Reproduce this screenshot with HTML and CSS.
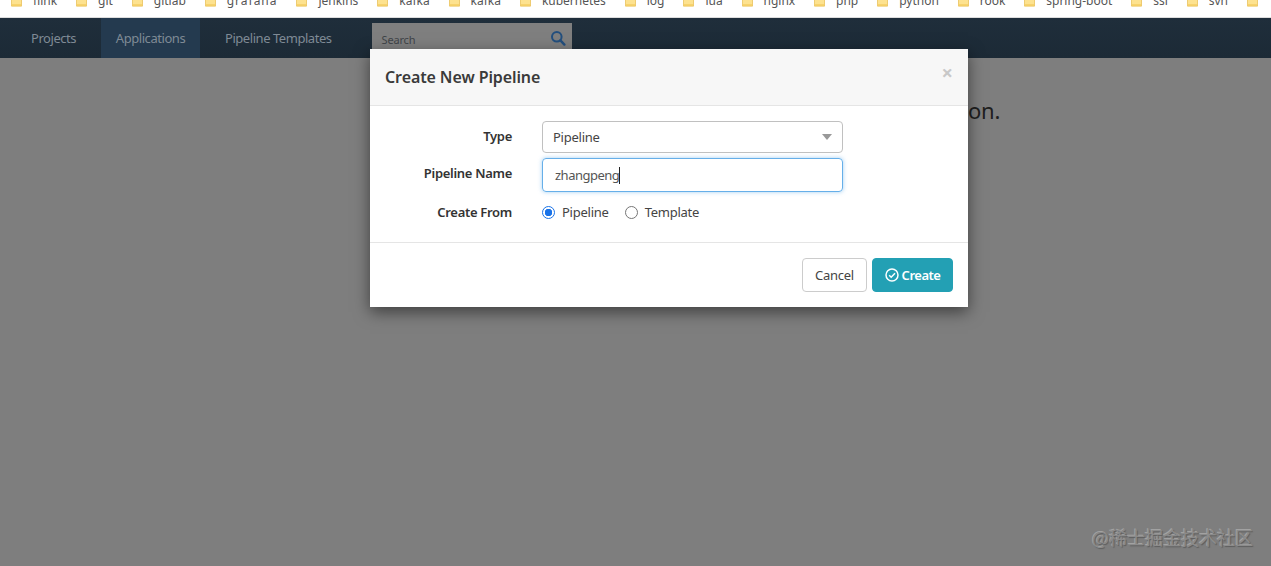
FILE: index.html
```html
<!DOCTYPE html>
<html lang="en">
<head>
<meta charset="utf-8">
<title>Create New Pipeline</title>
<link rel="stylesheet" href="styles.css">
</head>
<body>
<svg class="defs" width="0" height="0" aria-hidden="true">
  <symbol id="folder" viewBox="0 0 12 10">
    <path d="M0.5 0.5h4l1.2 1.5h5.8v7.5h-11z" fill="#fde28f" stroke="#e8bd4f" stroke-width="0.8"/>
    <path d="M1 7.5h10v1.6h-10z" fill="#f4cd62"/>
  </symbol>
</svg>
<div class="bookmarks">
  <ul class="bookmark-list">
    <li class="bookmark"><svg class="folder"><use href="#folder"/></svg>flink</li>
    <li class="bookmark"><svg class="folder"><use href="#folder"/></svg>git</li>
    <li class="bookmark"><svg class="folder"><use href="#folder"/></svg>gitlab</li>
    <li class="bookmark bookmark-wide"><svg class="folder"><use href="#folder"/></svg>grafana</li>
    <li class="bookmark"><svg class="folder"><use href="#folder"/></svg>jenkins</li>
    <li class="bookmark"><svg class="folder"><use href="#folder"/></svg>kafka</li>
    <li class="bookmark"><svg class="folder"><use href="#folder"/></svg>kafka</li>
    <li class="bookmark"><svg class="folder"><use href="#folder"/></svg>kubernetes</li>
    <li class="bookmark"><svg class="folder"><use href="#folder"/></svg>log</li>
    <li class="bookmark"><svg class="folder"><use href="#folder"/></svg>lua</li>
    <li class="bookmark"><svg class="folder"><use href="#folder"/></svg>nginx</li>
    <li class="bookmark"><svg class="folder"><use href="#folder"/></svg>php</li>
    <li class="bookmark"><svg class="folder"><use href="#folder"/></svg>python</li>
    <li class="bookmark"><svg class="folder"><use href="#folder"/></svg>rook</li>
    <li class="bookmark"><svg class="folder"><use href="#folder"/></svg>spring-boot</li>
    <li class="bookmark"><svg class="folder"><use href="#folder"/></svg>ssl</li>
    <li class="bookmark"><svg class="folder"><use href="#folder"/></svg>svn</li>
    <li class="bookmark"><svg class="folder"><use href="#folder"/></svg></li>
  </ul>
</div>
<nav class="nav">
  <a class="nav-link nav-projects">Projects</a>
  <a class="nav-link nav-active">Applications</a>
  <a class="nav-link nav-templates">Pipeline Templates</a>
  <div class="search">
    <span class="search-text">Search</span>
    <svg class="search-icon" viewBox="0 0 16 16"><circle cx="6.8" cy="6.8" r="4.8" fill="none" stroke="#234f7e" stroke-width="2"/><path d="M10.4 10.4l4 4.2" stroke="#234f7e" stroke-width="2.4" stroke-linecap="round"/></svg>
  </div>
</nav>
<main class="content">
  <p class="empty">No pipelines configured for this application.</p>
</main>
<section class="modal">
  <header class="modal-header">
    <h2 class="modal-title">Create New Pipeline</h2>
    <span class="close">×</span>
  </header>
  <form class="form">
    <label class="label label-type">Type</label>
    <div class="select"><span>Pipeline</span><i class="caret"></i></div>
    <label class="label label-name">Pipeline Name</label>
    <div class="input"><span>zhangpeng</span><i class="cursor"></i></div>
    <label class="label">Create From</label>
    <div class="radios">
      <span class="radio radio-on"></span><span class="radio-text">Pipeline</span>
      <span class="radio"></span><span class="radio-text">Template</span>
    </div>
  </form>
  <footer class="modal-footer">
    <button class="btn btn-cancel" type="button">Cancel</button>
    <button class="btn btn-create" type="button">
      <svg class="check" viewBox="0 0 14 14"><circle cx="7" cy="7" r="6" fill="none" stroke="#fff" stroke-width="1.5"/><path d="M4.2 7.2l2 2 3.8-4" fill="none" stroke="#fff" stroke-width="1.5"/></svg>Create
    </button>
  </footer>
</section>
<div class="watermark">@稀士掘金技术社区</div>
</body>
</html>
```

FILE: styles.css
```css
* { box-sizing: border-box; }
html, body { height: 100%; }
body {
  margin: 0;
  background: #7e7e7e;
  font-family: "Noto Sans", sans-serif;
  overflow: hidden;
}
.defs { position: absolute; }
.bookmarks {
  height: 18px;
  background: #fff;
  border-bottom: 1px solid #ddd;
  overflow: hidden;
}
.bookmark-list {
  display: flex;
  gap: 18.9px;
  list-style: none;
  margin: -7px 0 0;
  padding: 0 0 0 11px;
  font-size: 12px;
  line-height: 16px;
  color: #555;
  white-space: nowrap;
}
.bookmark { display: flex; align-items: center; }
.bookmark-wide { letter-spacing: 1px; }
.folder { width: 11px; height: 10px; margin-right: 11px; margin-top: 2px; }
.nav {
  height: 40px;
  display: flex;
  align-items: stretch;
  background: linear-gradient(#1f2e3b, #1c2a36);
  font-size: 13px;
  letter-spacing: -0.45px;
  color: #7f8a95;
}
.nav-link { display: flex; align-items: center; }
.nav-projects { width: 101px; padding-left: 31px; }
.nav-active { width: 99px; justify-content: center; background: #243a4f; }
.nav-templates { padding: 0 40px 0 25px; }
.search {
  width: 200px;
  height: 32px;
  margin-top: 5px;
  background: #7f7f7f;
  display: flex;
  align-items: center;
  justify-content: space-between;
  padding: 0 6px 0 10px;
  color: #3f4448;
  font-size: 11px;
  letter-spacing: -0.2px;
}
.search-icon { width: 16px; height: 16px; margin-top: -2px; }
.content { padding-top: 37px; }
.empty {
  margin: 0 271px 0 0;
  text-align: right;
  font-size: 22px;
  line-height: 30px;
  color: #1f1f1f;
  letter-spacing: -0.3px;
}
.modal {
  position: absolute;
  left: 370px;
  top: 49px;
  width: 598px;
  height: 258px;
  background: #fff;
  box-shadow: 0 5px 15px rgba(0,0,0,.5);
  color: #333;
}
.modal-header {
  height: 57px;
  background: #f7f7f7;
  border-bottom: 1px solid #e5e5e5;
  display: flex;
  align-items: center;
  justify-content: space-between;
  padding: 0 15px;
}
.modal-title { margin: 0; font-size: 16px; font-weight: 600; letter-spacing: -0.1px; color: #3a3a3a; }
.close { font-size: 20px; font-weight: 700; color: #c8c8c8; margin: -8px 0 0; line-height: 1; }
.form {
  display: grid;
  grid-template-columns: 142px 301px;
  grid-template-rows: 32px 34px 30px;
  column-gap: 30px;
  row-gap: 5px;
  padding: 15px 0 15px;
  border-bottom: 1px solid #e5e5e5;
  font-size: 13px;
  letter-spacing: -0.25px;
}
.label { text-align: right; font-weight: 600; letter-spacing: -0.3px; align-self: center; color: #333; }
.label-type { margin-bottom: 2px; }
.label-name { margin-bottom: 4px; }
.select {
  border: 1px solid #c0c0c0;
  border-radius: 4px;
  display: flex;
  align-items: center;
  justify-content: space-between;
  padding: 0 10px;
  color: #444;
}
.caret { border: 5.5px solid transparent; border-top: 6px solid #999; border-bottom: 0; }
.input {
  border: 1px solid #66afe9;
  border-radius: 4px;
  box-shadow: 0 0 4px rgba(102,175,233,.6);
  display: flex;
  align-items: center;
  padding: 0 12px;
  color: #555;
  letter-spacing: -0.5px;
}
.cursor { width: 1px; height: 17px; background: #222; }
.radios { display: flex; align-items: center; color: #444; }
.radio { width: 13px; height: 13px; border: 1px solid #767676; border-radius: 50%; background: #fff; }
.radio-on { border: 1.5px solid #1a73e8; background: radial-gradient(circle, #1a73e8 0 3.5px, #fff 4px); }
.radio-text { margin: 0 15px 0 7px; }
.radio-text:nth-child(2) { margin-right: 16px; }
.modal-footer {
  display: flex;
  justify-content: flex-end;
  gap: 5px;
  padding: 15px;
}
.btn {
  height: 34px;
  border-radius: 4px;
  font: inherit;
  font-size: 13px;
  letter-spacing: -0.25px;
  display: flex;
  align-items: center;
  justify-content: center;
  padding: 0;
}
.btn-cancel { width: 65px; background: #fff; border: 1px solid #ccc; color: #444; }
.btn-create { width: 81px; background: #23a0b4; border: 1px solid #23a0b4; color: #fff; font-weight: 600; letter-spacing: -0.5px; }
.check { width: 14px; height: 14px; margin-right: 3px; }
.watermark {
  position: absolute;
  right: 18px;
  top: 524px;
  font-family: "Noto Sans CJK SC", sans-serif;
  font-size: 18px;
  line-height: 26px;
  color: #8b8b8b;
  text-shadow: 1px 1px 1px #5c5c5c, -1px -1px 0 #a2a2a2;
}
```
